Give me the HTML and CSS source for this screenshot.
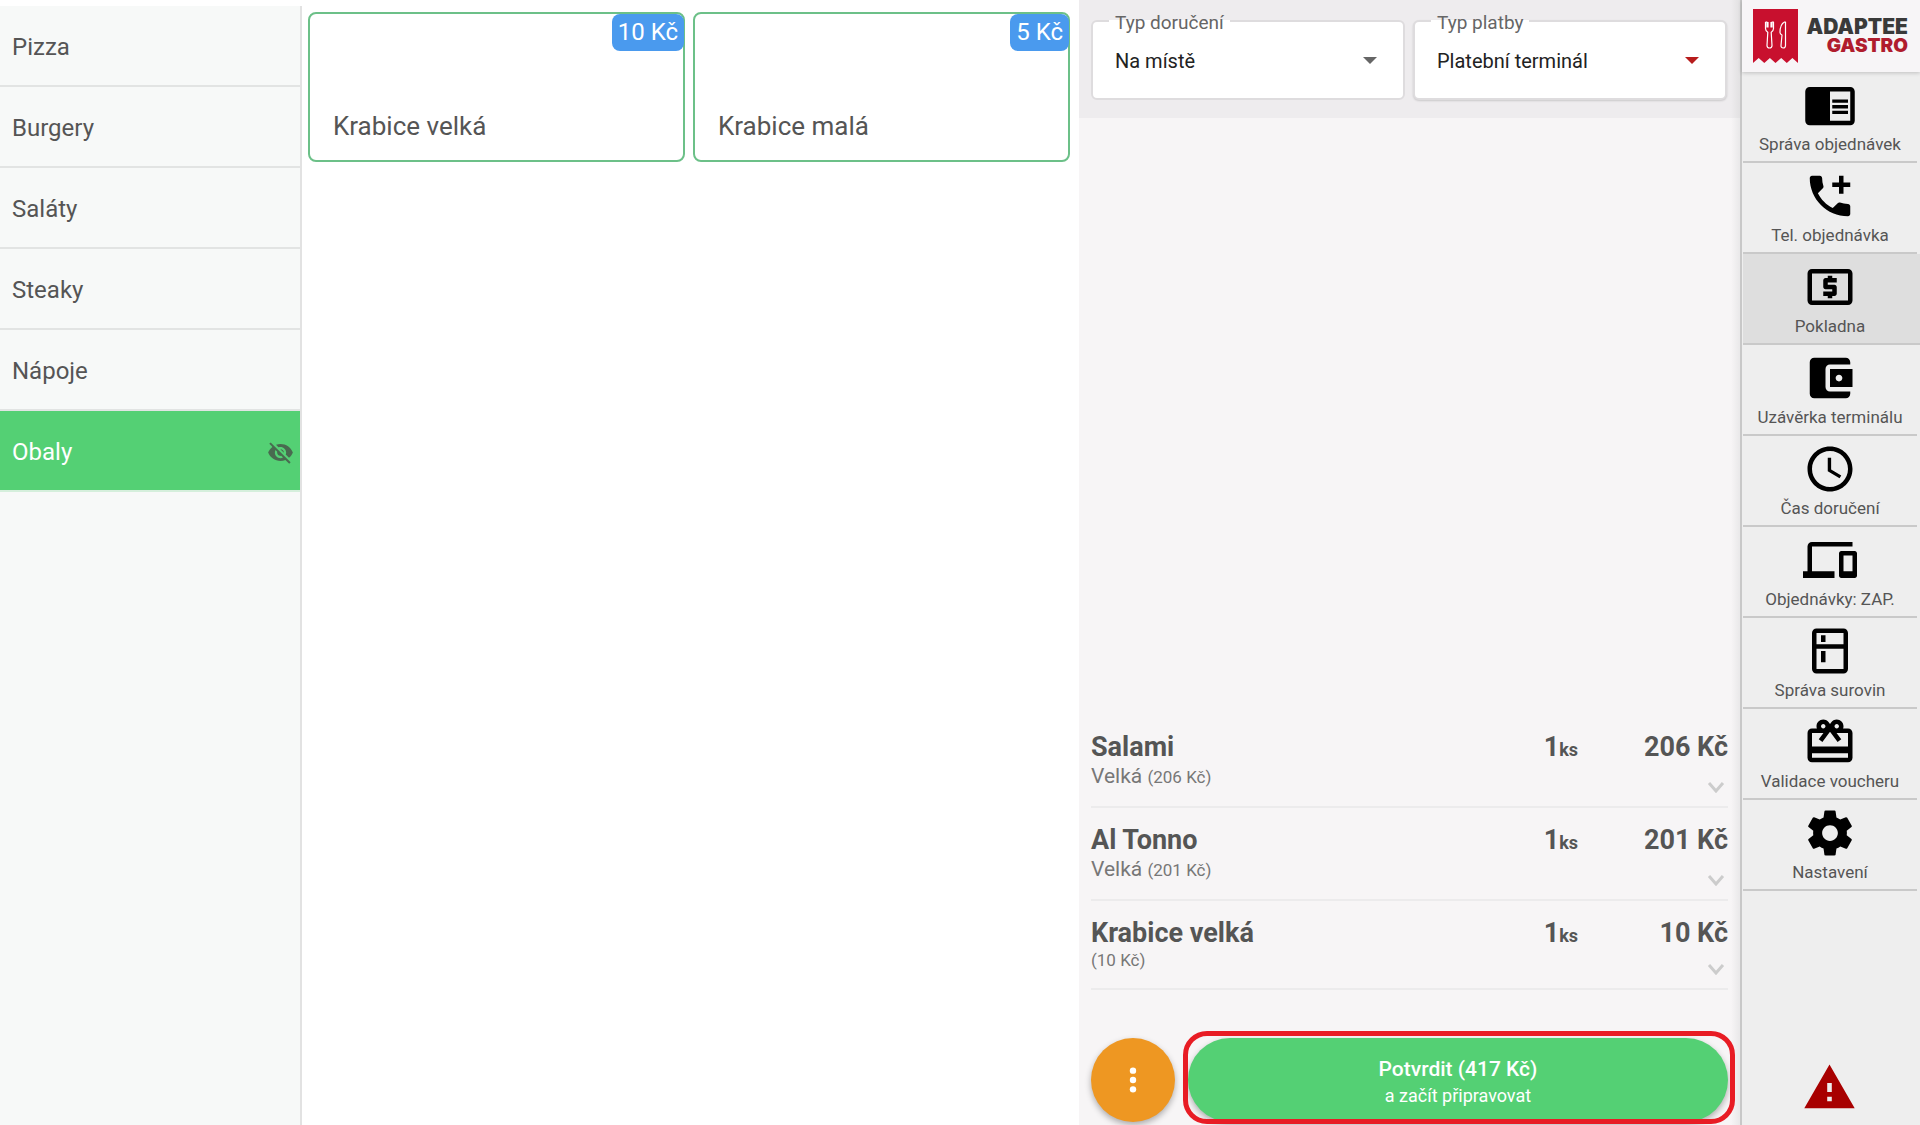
FILE: index.html
```html
<!DOCTYPE html>
<html lang="cs">
<head>
    <meta charset="UTF-8">
    <meta name="viewport" content="width=device-width, initial-scale=1.0">
    <title>Pokladna</title>
    <link rel="stylesheet" href="styles.css">
</head>
<body>
    <div class="app">
        <nav class="categories">
            <a href="#pizza" class="category">Pizza</a>
            <a href="#burgery" class="category">Burgery</a>
            <a href="#salaty" class="category">Saláty</a>
            <a href="#steaky" class="category">Steaky</a>
            <a href="#napoje" class="category">Nápoje</a>
            <a href="#obaly" class="category active">Obaly
                <svg class="hidden-icon" viewBox="0 0 24 24"><path d="M12 7c2.76 0 5 2.24 5 5 0 .65-.13 1.26-.36 1.83l2.92 2.92c1.51-1.26 2.7-2.89 3.43-4.75-1.73-4.39-6-7.5-11-7.5-1.4 0-2.74.25-3.98.7l2.16 2.16C10.74 7.13 11.35 7 12 7zM2 4.27l2.28 2.28.46.46C3.08 8.3 1.78 10.02 1 12c1.73 4.39 6 7.5 11 7.5 1.55 0 3.03-.3 4.38-.84l.42.42L19.73 22 21 20.73 3.27 3 2 4.27zM7.53 9.8l1.55 1.55c-.05.21-.08.43-.08.65 0 1.66 1.34 3 3 3 .22 0 .44-.03.65-.08l1.55 1.55c-.67.33-1.41.53-2.2.53-2.76 0-5-2.24-5-5 0-.79.2-1.53.53-2.2zm4.31-.78l3.15 3.15.02-.16c0-1.66-1.34-3-3-3l-.17.01z"/></svg>
            </a>
        </nav>

        <main class="products">
            <button class="product">Krabice velká <span class="price-tag">10 Kč</span></button>
            <button class="product">Krabice malá <span class="price-tag">5 Kč</span></button>
        </main>

        <section class="order">
            <div class="order-options">
                <div class="field">
                    <label for="delivery">Typ doručení</label>
                    <select id="delivery"><option>Na místě</option></select>
                    <svg class="arrow" viewBox="0 0 14 7"><path d="M0 0h14L7 7z"/></svg>
                </div>
                <div class="field focused">
                    <label for="payment">Typ platby</label>
                    <select id="payment"><option>Platební terminál</option></select>
                    <svg class="arrow" viewBox="0 0 14 7"><path d="M0 0h14L7 7z"/></svg>
                </div>
            </div>

            <ul class="items">
                <li class="item">
                    <span class="name">Salami</span>
                    <span class="qty">1<small>ks</small></span>
                    <span class="price">206 Kč</span>
                    <span class="variant">Velká <small>(206 Kč)</small></span>
                    <button class="expand" aria-label="Rozbalit"><svg viewBox="0 0 18 12"><path d="M2 2l7 8 7-8"/></svg></button>
                </li>
                <li class="item">
                    <span class="name">Al Tonno</span>
                    <span class="qty">1<small>ks</small></span>
                    <span class="price">201 Kč</span>
                    <span class="variant">Velká <small>(201 Kč)</small></span>
                    <button class="expand" aria-label="Rozbalit"><svg viewBox="0 0 18 12"><path d="M2 2l7 8 7-8"/></svg></button>
                </li>
                <li class="item">
                    <span class="name">Krabice velká</span>
                    <span class="qty">1<small>ks</small></span>
                    <span class="price">10 Kč</span>
                    <span class="variant plain"><small>(10 Kč)</small></span>
                    <button class="expand" aria-label="Rozbalit"><svg viewBox="0 0 18 12"><path d="M2 2l7 8 7-8"/></svg></button>
                </li>
            </ul>

            <div class="order-actions">
                <button class="more" aria-label="Další možnosti">
                    <svg viewBox="0 0 24 24"><circle cx="12" cy="5" r="2.4"/><circle cx="12" cy="12" r="2.4"/><circle cx="12" cy="19" r="2.4"/></svg>
                </button>
                <div class="confirm-wrap">
                    <button class="confirm"><strong>Potvrdit (417 Kč)</strong><span>a začít připravovat</span></button>
                </div>
            </div>
        </section>

        <aside class="sidebar">
            <div class="logo">
                <svg class="logo-mark" viewBox="0 0 45 54">
                    <path fill="#c8102e" d="M0 0h45v54l-5.600-5-5.600 5-5.600-5-5.700 5-5.600-5-5.600 5-5.600-5L0 54z"/>
                    <g fill="none" stroke="#fff" stroke-width="1.200" stroke-linejoin="round">
                        <path d="M12.500 13v6.500c0 2 1 3 2.300 3.700l-.8 13.300c0 3.300 5 3.300 5 0l-.8-13.300c1.300-.7 2.300-1.700 2.300-3.700V13h-1.500v5.500M15 13v5.500M18 13v5.500M12.500 13H14v5.500"/>
                        <path d="M31.500 13c-3 1.500-4.500 6-4.500 10.500 0 1.500.8 2 2 2.500l-1 10.500c-.3 3.300 4.500 3.300 4.500 0V13z"/>
                    </g>
                </svg>
                <div class="logo-text">ADAPTEE<span>GASTRO</span></div>
            </div>
            <nav class="menu">
                <a href="#orders" class="menu-item">
                    <svg viewBox="0 0 24 24"><path d="M13 12h7v1.500h-7zm0-2.500h7V11h-7zm0 5h7V16h-7zM21 4H3c-1.100 0-2 .9-2 2v13c0 1.100.9 2 2 2h18c1.100 0 2-.9 2-2V6c0-1.100-.9-2-2-2zm0 15h-9V6h9v13z"/></svg>
                    Správa objednávek
                </a>
                <a href="#phone" class="menu-item">
                    <svg viewBox="0 0 24 24"><path d="M20 15.500c-1.250 0-2.450-.2-3.570-.57-.1-.03-.21-.05-.31-.05-.26 0-.51.1-.71.29l-2.200 2.200c-2.830-1.440-5.150-3.750-6.590-6.590l2.200-2.210c.28-.26.36-.65.25-1C8.700 6.450 8.500 5.250 8.500 4c0-.55-.45-1-1-1H4c-.55 0-1 .45-1 1 0 9.390 7.610 17 17 17 .55 0 1-.45 1-1v-3.500c0-.55-.45-1-1-1zM21 6h-3V3h-2v3h-3v2h3v3h2V8h3z"/></svg>
                    Tel. objednávka
                </a>
                <a href="#register" class="menu-item active">
                    <svg viewBox="0 0 24 24"><path d="M11 17h2v-1h1c.55 0 1-.45 1-1v-3c0-.55-.45-1-1-1h-3v-1h4V8h-2V7h-2v1h-1c-.55 0-1 .45-1 1v3c0 .55.45 1 1 1h3v1H9v2h2v1zm9-13H4c-1.110 0-1.990.89-1.990 2L2 18c0 1.110.89 2 2 2h16c1.110 0 2-.89 2-2V6c0-1.110-.89-2-2-2zm0 14H4V6h16v12z"/></svg>
                    Pokladna
                </a>
                <a href="#closing" class="menu-item">
                    <svg viewBox="0 0 24 24"><path d="M21 18v1c0 1.100-.9 2-2 2H5c-1.110 0-2-.9-2-2V5c0-1.100.89-2 2-2h14c1.100 0 2 .9 2 2v1h-9c-1.110 0-2 .9-2 2v8c0 1.100.89 2 2 2h9zm-9-2h10V8H12v8zm4-2.500c-.83 0-1.500-.67-1.500-1.500s.67-1.500 1.500-1.500 1.500.67 1.500 1.500-.67 1.500-1.500 1.500z"/></svg>
                    Uzávěrka terminálu
                </a>
                <a href="#time" class="menu-item">
                    <svg viewBox="0 0 24 24"><path d="M11.990 2C6.470 2 2 6.480 2 12s4.470 10 9.990 10C17.520 22 22 17.520 22 12S17.520 2 11.990 2zM12 20c-4.420 0-8-3.580-8-8s3.580-8 8-8 8 3.580 8 8-3.580 8-8 8zm.5-13H11v6l5.250 3.150.75-1.230-4.500-2.670z"/></svg>
                    Čas doručení
                </a>
                <a href="#devices" class="menu-item">
                    <svg viewBox="0 0 24 24"><path d="M4 6h18V4H4c-1.100 0-2 .9-2 2v11H0v3h14v-3H4V6zm19 2h-6c-.55 0-1 .45-1 1v10c0 .55.45 1 1 1h6c.55 0 1-.45 1-1V9c0-.55-.45-1-1-1zm-1 9h-4v-7h4v7z"/></svg>
                    Objednávky: ZAP.
                </a>
                <a href="#stock" class="menu-item">
                    <svg viewBox="0 0 24 24"><path d="M18 2.010L6 2c-1.100 0-2 .89-2 2v16c0 1.100.9 2 2 2h12c1.100 0 2-.9 2-2V4c0-1.110-.9-1.990-2-1.990zM18 20H6v-9.020h12V20zm0-11H6V4h12v5zM8 5h2v3H8zm0 7h2v5H8z"/></svg>
                    Správa surovin
                </a>
                <a href="#voucher" class="menu-item">
                    <svg viewBox="0 0 24 24"><path d="M20 6h-2.180c.11-.31.18-.65.18-1 0-1.660-1.340-3-3-3-1.050 0-1.960.54-2.500 1.350l-.5.67-.5-.68C10.960 2.540 10.050 2 9 2 7.340 2 6 3.340 6 5c0 .35.07.69.18 1H4c-1.110 0-1.990.89-1.990 2L2 19c0 1.110.89 2 2 2h16c1.110 0 2-.89 2-2V8c0-1.110-.89-2-2-2zm-5-2c.55 0 1 .45 1 1s-.45 1-1 1-1-.45-1-1 .45-1 1-1zM9 4c.55 0 1 .45 1 1s-.45 1-1 1-1-.45-1-1 .45-1 1-1zm11 15H4v-2h16v2zm0-5H4V8h5.080L7 10.830 8.620 12 11 8.760l1-1.360 1 1.360L15.380 12 17 10.830 14.920 8H20v6z"/></svg>
                    Validace voucheru
                </a>
                <a href="#settings" class="menu-item">
                    <svg viewBox="0 0 24 24"><path d="M19.430 12.980c.04-.32.07-.64.07-.98s-.03-.66-.07-.98l2.110-1.650c.19-.15.24-.42.12-.64l-2-3.460c-.12-.22-.39-.3-.61-.22l-2.490 1c-.52-.4-1.080-.73-1.690-.98l-.38-2.650C14.460 2.180 14.250 2 14 2h-4c-.25 0-.46.18-.49.42l-.38 2.650c-.61.25-1.170.59-1.690.98l-2.490-1c-.23-.09-.49 0-.61.22l-2 3.460c-.13.22-.07.49.12.64l2.110 1.650c-.04.32-.07.65-.07.98s.03.66.07.98l-2.110 1.650c-.19.15-.24.42-.12.64l2 3.460c.12.22.39.3.61.22l2.490-1c.52.4 1.080.73 1.690.98l.38 2.650c.03.24.24.42.49.42h4c.25 0 .46-.18.49-.42l.38-2.650c.61-.25 1.170-.59 1.690-.98l2.490 1c.23.09.49 0 .61-.22l2-3.460c.12-.22.07-.49-.12-.64l-2.110-1.650zM12 15.500c-1.930 0-3.500-1.570-3.500-3.500s1.570-3.500 3.500-3.500 3.500 1.570 3.500 3.500-1.570 3.500-3.500 3.500z"/></svg>
                    Nastavení
                </a>
            </nav>
            <a href="#alerts" class="alert" aria-label="Upozornění">
                <svg viewBox="0 0 24 24"><path d="M1 21h22L12 2 1 21zm12-3h-2v-2h2v2zm0-4h-2v-4h2v4z"/></svg>
            </a>
        </aside>
    </div>
</body>
</html>
```
FILE: styles.css
```css
* { box-sizing: border-box; }
body { margin: 0; font-family: Roboto, "Liberation Sans", sans-serif; color: #555; background: #fff; }
a { color: inherit; text-decoration: none; }
button { font-family: inherit; color: inherit; border: 0; background: none; padding: 0; cursor: pointer; }
svg { display: block; fill: currentColor; }

.app { display: grid; grid-template-columns: 302px 1fr 661px 180px; min-height: 100vh; }

/* categories */
.categories { margin-top: 6px; background: #f7f9f8; border-right: 2px solid #e2e2e2; }
.category {
    display: flex; align-items: center; justify-content: space-between;
    height: 81px; padding: 3px 6px 0 12px; border-bottom: 2px solid #e2e4e3; font-size: 24px;
}
.category.active { background: #54d074; color: #fff; border-bottom-color: #d5efdc; }
.hidden-icon { width: 27px; height: 27px; color: #496a50; }

/* products */
.products { display: grid; grid-template-columns: 1fr 1fr; gap: 8px; align-content: start; padding: 12px 9px 12px 6px; }
.product {
    position: relative; display: flex; align-items: flex-end; height: 150px; padding: 0 23px 18px;
    border: 2px solid #6cc088; border-radius: 8px; background: #fff; font-size: 26px; line-height: 32px; text-align: left;
}
.price-tag {
    position: absolute; top: 0; right: -1px; padding: 0 6px; border-radius: 8px;
    background: #4a9aee; color: #fff; font-size: 24px; line-height: 37px;
}

/* order */
.order { display: flex; flex-direction: column; background: linear-gradient(to left, #e9e8e9, #f7f5f6 9px); }
.order-options { display: flex; gap: 8px; padding: 20px 13px 18px 12px; background: linear-gradient(to left, #e2e1e2, #eeecee 9px); }
.field { position: relative; flex: 1; height: 80px; border: 2px solid #dedcde; border-radius: 6px; background: #fff; }
.field.focused { box-shadow: 0 1px 2px rgba(0,0,0,0.15); }
.field label {
    position: absolute; top: -10px; left: 16px; padding: 0 6px; font-size: 19px; line-height: 22px; color: #666;
    background: linear-gradient(transparent 8px, #fff 8px);
}
.field select {
    width: 100%; height: 100%; padding: 2px 22px 0; border: 0; background: none; appearance: none;
    font-family: inherit; font-size: 20px; color: #222;
}
.arrow { position: absolute; top: 35px; right: 26px; width: 14px; height: 7px; color: #666; pointer-events: none; }
.focused .arrow { color: #b71c1c; }

.items { list-style: none; margin: auto 12px 0; padding: 0; }
.item {
    display: grid; grid-template-columns: 1fr auto 150px; align-items: start;
    padding: 16px 0 13px; border-bottom: 2px solid #ecebec;
}
.item small { line-height: 16px; }
.name, .qty, .price { font-size: 27px; line-height: 32px; font-weight: 700; }
.qty small { font-size: 18px; }
.price { text-align: right; }
.variant { grid-column: span 2; padding-bottom: 4px; font-size: 21px; line-height: 26px; color: #777; }
.variant small { font-size: 17px; }
.variant.plain { font-size: 17px; line-height: 22px; }
.expand { justify-self: end; align-self: end; margin-right: 3px; }
.expand svg { width: 18px; height: 12px; fill: none; stroke: #ccc; stroke-width: 3; }

.order-actions { display: flex; gap: 13px; padding: 48px 12px 3px; }
.more {
    display: flex; align-items: center; justify-content: center; width: 84px; height: 84px;
    border-radius: 50%; background: #ee9722; color: #fff; box-shadow: 0 3px 6px rgba(0,0,0,0.3);
}
.more svg { width: 32px; height: 32px; }
.confirm-wrap { position: relative; flex: 1; }
.confirm-wrap::after {
    content: ""; position: absolute; inset: -7px -7px -2px -5px;
    border: 5px solid #e81c24; border-radius: 24px; pointer-events: none;
}
.confirm {
    display: flex; flex-direction: column; align-items: center; justify-content: center; width: 100%; height: 84px;
    padding-top: 4px; border-radius: 42px; background: #54d074; color: #fff; box-shadow: 0 3px 6px rgba(0,0,0,0.3);
    font-size: 18px; line-height: 26px;
}
.confirm strong { font-size: 21px; line-height: 28px; font-weight: 500; }

/* sidebar */
.sidebar { display: flex; flex-direction: column; background: #eee; border-left: 2px solid #c8c8c8; }
.logo {
    display: flex; align-items: center; justify-content: space-between; height: 72px; padding: 0 12px 0 11px;
    background: #f7f5f7; box-shadow: 0 1px 4px rgba(0,0,0,0.2);
}
.logo-mark { width: 45px; height: 54px; }
.logo-text { font-family: Inter, sans-serif; font-size: 21px; line-height: 19px; font-weight: 900; color: #3a3a3a; text-align: right; }
.logo-text span { display: block; font-size: 19px; color: #b01c2e; }
.menu-item {
    display: flex; flex-direction: column; align-items: center; height: 91px; padding-top: 6px;
    font-size: 17px; line-height: 24px; border-bottom: 2px solid #c9c9c9; margin: 0 3px 0 1px;
}
.menu-item svg { width: 54px; height: 54px; color: #000; }
.menu-item.active { background: #dedede; margin-right: 0; padding-right: 3px; }
.alert { align-self: center; margin: auto 3px 10px 0; color: #a80000; }
.alert svg { width: 55px; height: 55px; }
```
